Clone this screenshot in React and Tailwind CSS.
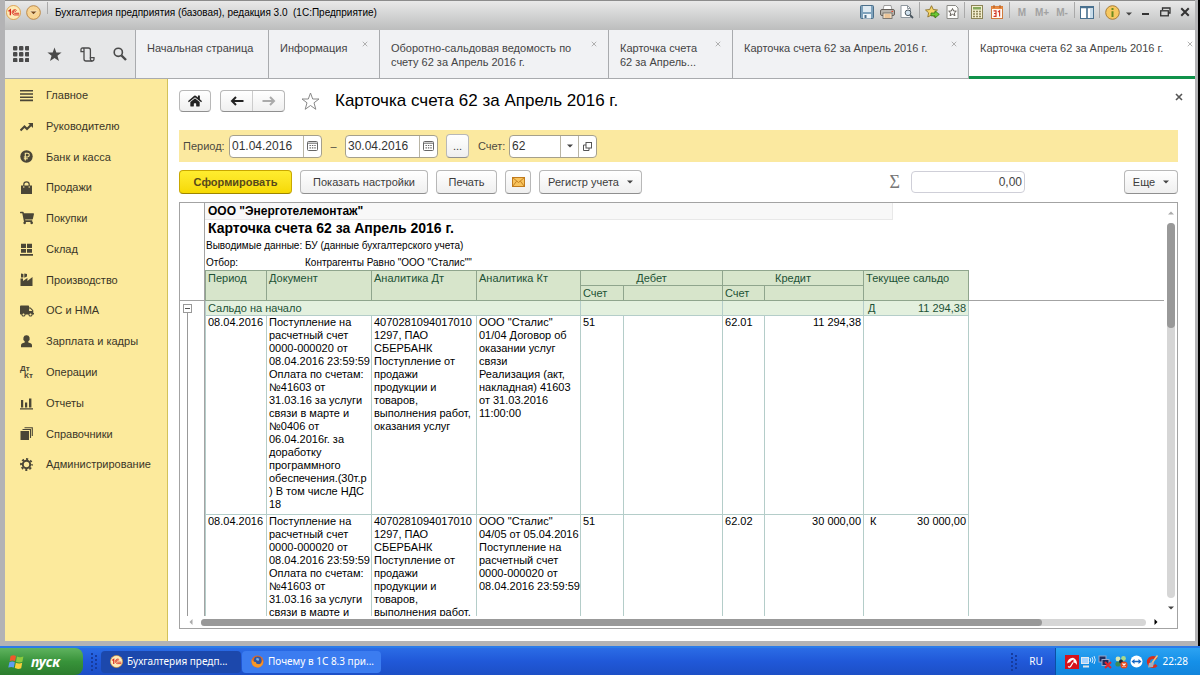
// src/App.jsx

import React, { useState } from 'react';
import { FaHome, FaShoppingCart, FaTruck } from 'react-icons/fa';

// ---------- small icons ----------

const LogoIcon = ({ size = 15 }) => (
    <svg width={size} height={size} viewBox="0 0 16 16">
        <circle cx="8" cy="8" r="7.5" fill="#fdebb8" stroke="#d9902f" strokeWidth="0.8" />
        <path d="M2.6 6.6 L4.6 5.2 V11" fill="none" stroke="#d8261c" strokeWidth="1.4" />
        <path d="M11.3 5.8 A2.8 2.8 0 1 0 9 10.6 H14 M10.2 7.2 A1.3 1.3 0 1 0 9 8.8 H14" fill="none" stroke="#d8261c" strokeWidth="1" />
    </svg>
);

const MenuArrowIcon = () => (
    <svg width="15" height="15" viewBox="0 0 16 16">
        <circle cx="8" cy="8" r="7.3" fill="#f8d492" stroke="#b98443" />
        <path d="M4 6.5 H12 L8 10.5 Z" fill="#7a4b1c" stroke="#fff3d8" strokeWidth="0.8" />
    </svg>
);

const SaveIcon = () => (
    <svg width="14" height="14" viewBox="0 0 14 14">
        <rect x="0.5" y="0.5" width="13" height="13" rx="1" fill="#7fa3bd" stroke="#4b6f8b" />
        <rect x="3" y="1" width="8" height="6" fill="#dfeaf2" />
        <rect x="3" y="9" width="8" height="4.5" fill="#eef4f8" />
        <rect x="4.5" y="10" width="2" height="3" fill="#4b6f8b" />
    </svg>
);

const PrintIcon = () => (
    <svg width="15" height="14" viewBox="0 0 15 14">
        <path d="M4 0.5 H11 L12 5 H3 Z" fill="#fff" stroke="#888" strokeWidth="0.8" />
        <rect x="0.5" y="4.5" width="14" height="6" rx="1.5" fill="#b9b5ae" stroke="#66605a" />
        <rect x="3" y="8" width="9" height="5.5" fill="#f7ecd6" stroke="#66605a" strokeWidth="0.8" />
        <path d="M4.5 10 H10.5 M4.5 12 H10.5" stroke="#d98c3c" strokeWidth="0.8" />
        <rect x="11.5" y="5.8" width="1.6" height="1.2" fill="#e0462c" />
    </svg>
);

const PreviewIcon = () => (
    <svg width="14" height="14" viewBox="0 0 14 14">
        <path d="M1 0.5 H7.5 L10.5 3.5 V12.5 H1 Z" fill="#fff" stroke="#8e979e" />
        <path d="M7.5 0.5 V3.5 H10.5" fill="none" stroke="#8e979e" />
        <circle cx="8" cy="7.8" r="2.8" fill="#d2e3f0" stroke="#4c5860" />
        <path d="M10 10 L13 13" stroke="#4c5860" strokeWidth="1.8" />
    </svg>
);

const StarAddIcon = () => (
    <svg width="15" height="14" viewBox="0 0 15 14">
        <path d="M6.5 0.7 L8.3 4.5 L12.5 5 L9.4 7.8 L10.2 12 L6.5 10 L2.8 12 L3.6 7.8 L0.5 5 L4.7 4.5 Z" fill="#f7d565" stroke="#8d7329" strokeWidth="0.9" />
        <path d="M6 8 H10 V5.8 L14.3 9.4 L10 13 V10.8 H6 Z" fill="#6cc832" stroke="#357313" strokeWidth="0.8" />
    </svg>
);

const StarPageIcon = () => (
    <svg width="13" height="14" viewBox="0 0 13 14">
        <path d="M1 0.5 H9.5 L12 3 V13.5 H1 Z" fill="#fdfdfb" stroke="#8a8a86" />
        <path d="M6.5 3.5 L7.6 6 L10.3 6.2 L8.3 8 L8.9 10.7 L6.5 9.3 L4.1 10.7 L4.7 8 L2.7 6.2 L5.4 6 Z" fill="none" stroke="#55504a" strokeWidth="0.9" />
    </svg>
);

const CalcIcon = () => (
    <svg width="12" height="14" viewBox="0 0 12 14">
        <rect x="0.5" y="0.5" width="11" height="13" fill="#f4efcf" stroke="#8c8457" />
        <rect x="2" y="2" width="8" height="2.5" fill="#87a95c" />
        <path d="M2 6.5 H10 M2 9 H10 M2 11.5 H10" stroke="#8c8457" strokeWidth="1.4" strokeDasharray="2 1" />
    </svg>
);

const CalendarColorIcon = () => (
    <svg width="12" height="14" viewBox="0 0 12 14">
        <rect x="0.5" y="1.5" width="11" height="12" fill="#fffaf2" stroke="#d0793b" />
        <rect x="0.5" y="1.5" width="11" height="2.5" fill="#ea8b42" />
        <path d="M3 0 V3 M9 0 V3" stroke="#a65a22" />
        <path d="M2.5 5.8 H5 V11.4 H2.5 M3 8.5 H5 M7 7 L8.6 5.8 V11.6" fill="none" stroke="#d3382a" strokeWidth="1.2" />
    </svg>
);

const PanelsIcon = () => (
    <svg width="14" height="13" viewBox="0 0 14 13">
        <rect x="0.5" y="0.5" width="13" height="12" fill="#fff" stroke="#49708f" />
        <path d="M0.5 1.5 H13.5 M7 1 V12" stroke="#49708f" strokeWidth="1.6" />
        <rect x="10" y="3" width="3" height="9" fill="#c8dcea" />
    </svg>
);

const InfoIcon = () => (
    <svg width="15" height="15" viewBox="0 0 15 15">
        <circle cx="7.5" cy="7.5" r="6.8" fill="#f7c860" stroke="#a87c35" />
        <path d="M7.5 3 V5 M7.5 6.3 V12" stroke="#6b8a1e" strokeWidth="2" />
    </svg>
);

const Caret = ({ className = 'text-[#444]' }) => (
    <svg width="6" height="4" viewBox="0 0 6 4" className={className}>
        <path d="M0 0.5 H6 L3 3.5 Z" fill="currentColor" />
    </svg>
);

const CloseIcon = ({ size = 6, stroke = '#999', width = 1 }) => (
    <svg width={size} height={size} viewBox="0 0 8 8">
        <path d="M1 1 L7 7 M7 1 L1 7" stroke={stroke} strokeWidth={width} />
    </svg>
);

const GridIcon = () => (
    <svg width="16" height="16" viewBox="0 0 16 16" fill="#4a4a4a">
        {[0, 6, 12].map((y) => [0, 6, 12].map((x) => (
            <rect key={`${x}-${y}`} x={x} y={y} width="4.4" height="4.4" rx="1" />
        )))}
    </svg>
);

const StarIcon = () => (
    <svg width="15" height="15" viewBox="0 0 19 19" fill="#4a4a4a">
        <path d="M9.5 0.5 L11.8 6.9 H18.5 L13.2 11 L15.2 17.8 L9.5 13.8 L3.8 17.8 L5.8 11 L0.5 6.9 H7.2 Z" />
    </svg>
);

const HistoryIcon = () => (
    <svg width="15" height="15" viewBox="0 0 15 15" fill="none" stroke="#4a4a4a" strokeWidth="1.3">
        <path d="M4 4.6 H1 V2.6 Q1 1 2.6 1 H8.4 Q10.4 1 10.4 3 V10.6 H14 V12.2 Q14 14 12.2 14 H6 Q4 14 4 12 V2.6 Q4 1 2.6 1" />
        <path d="M10.4 10.6 V12.2 Q10.4 14 12.2 14" />
    </svg>
);

const SearchIcon = () => (
    <svg width="14" height="14" viewBox="0 0 14 14" fill="none" stroke="#4a4a4a">
        <circle cx="5.3" cy="5.3" r="4.1" strokeWidth="1.6" />
        <path d="M8.5 8.5 L13 13" strokeWidth="2.4" />
    </svg>
);

const ArrowIcon = ({ flip, color }) => (
    <svg width="14" height="10" viewBox="0 0 14 10" className={flip ? 'rotate-180' : ''}>
        <path d="M13.5 5 H2 M6 1 L2 5 L6 9" fill="none" stroke={color} strokeWidth="2" />
    </svg>
);

const CalendarIcon = () => (
    <svg width="11" height="10" viewBox="0 0 11 10">
        <rect x="0.5" y="0.5" width="10" height="9" rx="1" fill="#fff" stroke="#666" />
        <path d="M1 2.2 H10" stroke="#666" />
        <path d="M2.5 4.5 H9 M2.5 6.8 H9" stroke="#666" strokeWidth="1.2" strokeDasharray="1.4 1" />
    </svg>
);

const OpenIcon = () => (
    <svg width="9" height="9" viewBox="0 0 9 9" fill="none" stroke="#555">
        <rect x="3" y="0.5" width="5.5" height="5.5" />
        <path d="M3 3 H0.5 V8.5 H6 V6" />
    </svg>
);

const MailIcon = () => (
    <svg width="13" height="10" viewBox="0 0 13 10">
        <rect x="0.5" y="0.5" width="12" height="9" fill="#f8c35c" stroke="#c07a1c" />
        <path d="M0.5 0.5 L6.5 5.5 L12.5 0.5 M0.5 9.5 L4.6 4.2 M12.5 9.5 L8.4 4.2" fill="none" stroke="#c07a1c" strokeWidth="0.9" />
    </svg>
);

const sideIcons = {
    main: <path d="M0 1.8 H13 M0 5 H13 M0 8.2 H13 M0 11.4 H13" stroke="#4a4636" strokeWidth="1.6" />,
    chart: (
        <g>
            <path d="M0.5 10.5 L4.5 6.5 L7 9 L11.5 4.5" fill="none" stroke="#4a4636" strokeWidth="2.1" />
            <path d="M8 3 H13 V8 Z" />
        </g>
    ),
    ruble: (
        <g>
            <circle cx="6.5" cy="6.5" r="6.2" />
            <path d="M5.3 10.5 V3.2 H7.4 A1.9 1.9 0 0 1 7.4 7 H3.8 M3.8 8.7 H7.8" fill="none" stroke="#fcea9c" strokeWidth="1.1" />
        </g>
    ),
    bag: (
        <g>
            <path d="M1 4.5 H12 V13 H1 Z" />
            <path d="M3.8 6.5 V3.5 A2.7 2.7 0 0 1 9.2 3.5 V6.5" fill="none" stroke="#4a4636" strokeWidth="1.2" />
            <path d="M3.8 5 V7 M9.2 5 V7" stroke="#fcea9c" strokeWidth="0.8" />
        </g>
    ),
    store: <path d="M1 0.8 H6 V5 H1 Z M7 0.8 H12 V5 H7 Z M1 6 H6 V9.8 H1 Z M7 6 H12 V9.8 H7 Z M0 11 H13 V12.8 H0 Z" />,
    factory: <path d="M0.5 13 V5.6 H3 V8 L7.4 5 V8 L12.5 4 V13 Z M1 0.5 L3.4 1 V4.6 H1 Z M4.3 0.5 L7 1 V3.6 L4.3 4.8 Z" />,
    person: <path d="M6.5 0.3 A3 3.2 0 0 1 8.3 6.2 V7.6 Q12 8.3 12 10.4 V12.3 H1 V10.4 Q1 8.3 4.7 7.6 V6.2 A3 3.2 0 0 1 6.5 0.3 Z" />,
    bars: <path d="M0 11.3 H13 V12.6 H0 Z M1 3 H3.2 V10.6 H1 Z M5 5.5 H7.2 V10.6 H5 Z M9 1.5 H11.4 V10.6 H9 Z" />,
    books: (
        <g>
            <rect x="0.5" y="4" width="8.5" height="9" />
            <path d="M2.5 2.5 H10.5 V11 M4.5 0.7 H12.3 V9" fill="none" stroke="#4a4636" strokeWidth="1.1" />
        </g>
    ),
    cog: (
        <g fill="none" stroke="#4a4636">
            <circle cx="6.5" cy="6.5" r="3.7" strokeWidth="2" />
            <circle cx="6.5" cy="6.5" r="5.5" strokeWidth="1.8" strokeDasharray="2.16 2.16" strokeDashoffset="1.08" />
        </g>
    ),
};

const SideIcon = ({ name }) => {
    if (name === 'cart') return <FaShoppingCart size={14} />;
    if (name === 'truck') return <FaTruck size={14} />;
    if (name === 'dtkt') {
        return (
            <span className="flex flex-col text-[8px] leading-[7px] font-bold" aria-hidden="true">
                <span>Дт</span>
                <span className="pl-1">Кт</span>
            </span>
        );
    }
    return <svg width="13" height="13" viewBox="0 0 13 13" fill="#4a4636">{sideIcons[name]}</svg>;
};

// ---------- data ----------

const tabs = [
    { title: 'Начальная страница', width: 'w-[133px]', closable: false },
    { title: 'Информация', width: 'w-[111px]', closable: true },
    { title: 'Оборотно-сальдовая ведомость по\nсчету 62 за Апрель 2016 г.', width: 'w-[229px]', closable: true },
    { title: 'Карточка счета\n62 за Апрель...', width: 'w-[124px]', closable: true },
    { title: 'Карточка счета 62 за Апрель 2016 г.', width: 'w-[236px]', closable: true },
];

const sections = [
    { icon: 'main', label: 'Главное' },
    { icon: 'chart', label: 'Руководителю' },
    { icon: 'ruble', label: 'Банк и касса' },
    { icon: 'bag', label: 'Продажи' },
    { icon: 'cart', label: 'Покупки' },
    { icon: 'store', label: 'Склад' },
    { icon: 'factory', label: 'Производство' },
    { icon: 'truck', label: 'ОС и НМА' },
    { icon: 'person', label: 'Зарплата и кадры' },
    { icon: 'dtkt', label: 'Операции' },
    { icon: 'bars', label: 'Отчеты' },
    { icon: 'books', label: 'Справочники' },
    { icon: 'cog', label: 'Администрирование' },
];

const entries = [
    {
        date: '08.04.2016',
        doc: 'Поступление на\nрасчетный счет\n0000-000020 от\n08.04.2016 23:59:59\nОплата по счетам:\n№41603 от\n31.03.16 за услуги\nсвязи в марте и\n№0406 от\n06.04.2016г. за\nдоработку\nпрограммного\nобеспечения.(30т.р\n) В том числе НДС\n18',
        debitInfo: '4070281094017010\n1297, ПАО\nСБЕРБАНК\nПоступление от\nпродажи\nпродукции и\nтоваров,\nвыполнения работ,\nоказания услуг',
        creditInfo: 'ООО "Сталис"\n01/04 Договор об\nоказании услуг\nсвязи\nРеализация (акт,\nнакладная) 41603\nот 31.03.2016\n11:00:00',
        debit: '51',
        credit: '62.01',
        amount: '11 294,38',
        side: '',
        balance: '',
    },
    {
        date: '08.04.2016',
        doc: 'Поступление на\nрасчетный счет\n0000-000020 от\n08.04.2016 23:59:59\nОплата по счетам:\n№41603 от\n31.03.16 за услуги\nсвязи в марте и',
        debitInfo: '4070281094017010\n1297, ПАО\nСБЕРБАНК\nПоступление от\nпродажи\nпродукции и\nтоваров,\nвыполнения работ,',
        creditInfo: 'ООО "Сталис"\n04/05 от 05.04.2016\nПоступление на\nрасчетный счет\n0000-000020 от\n08.04.2016 23:59:59',
        debit: '51',
        credit: '62.02',
        amount: '30 000,00',
        side: 'К',
        balance: '30 000,00',
    },
];

// ---------- window chrome ----------

const Tool = ({ label, children }) => (
    <button aria-label={label} className="w-5 h-5 flex items-center justify-center">{children}</button>
);

const ToolSeparator = () => <span className="w-px h-4 mx-0.5 -mt-1 bg-[#a9a9a9]" />;

const TitleBar = () => (
    <header className="h-[30px] pb-[7px] pl-px flex items-center border-t border-[#8c8c8c] bg-linear-to-b from-[#e9e9e9] via-[#d2d3d3] to-[#bcbdbd]">
        <LogoIcon />
        <span className="ml-[5px]"><MenuArrowIcon /></span>
        <span className="w-px h-3 ml-1.5 -mt-2 bg-[#aaa]" />
        <h1 className="ml-[7px] flex-1 text-[10px] text-black whitespace-pre">Бухгалтерия предприятия (базовая), редакция 3.0  (1С:Предприятие)</h1>
        <Tool label="Сохранить"><SaveIcon /></Tool>
        <Tool label="Печать"><PrintIcon /></Tool>
        <Tool label="Просмотр"><PreviewIcon /></Tool>
        <ToolSeparator />
        <Tool label="Добавить в избранное"><StarAddIcon /></Tool>
        <Tool label="Избранное"><StarPageIcon /></Tool>
        <ToolSeparator />
        <Tool label="Калькулятор"><CalcIcon /></Tool>
        <Tool label="Календарь"><CalendarColorIcon /></Tool>
        <ToolSeparator />
        {['M', 'M+', 'M-'].map((m) => (
            <button key={m} className="w-5 text-[10px] font-bold text-[#a2a2a2]">{m}</button>
        ))}
        <ToolSeparator />
        <Tool label="Панели"><PanelsIcon /></Tool>
        <ToolSeparator />
        <Tool label="О программе"><InfoIcon /></Tool>
        <button aria-label="Еще" className="w-[13px] h-5 pt-1 flex items-center justify-center"><Caret /></button>
        <Tool label="Свернуть"><span className="w-[7px] h-0.5 mt-1 bg-[#333]" /></Tool>
        <Tool label="Восстановить">
            <svg width="11" height="10" viewBox="0 0 11 10" fill="none" stroke="#333" strokeWidth="1.3">
                <path d="M2.5 3 V1 H10 V6 H8.5" />
                <rect x="0.7" y="3.8" width="7.6" height="5" />
            </svg>
        </Tool>
        <Tool label="Закрыть"><CloseIcon size={10} stroke="#333" width={1.6} /></Tool>
    </header>
);

const TabBar = () => (
    <div className="h-[49px] flex bg-[#f1f2f4] text-[11px] leading-[14px] text-[#444]">
        <div className="w-[131px] shrink-0 px-2 flex items-center justify-between bg-[#e6e7e8] border-r border-b border-[#a9abae]">
            <button aria-label="Меню"><GridIcon /></button>
            <button aria-label="Избранное"><StarIcon /></button>
            <button aria-label="История"><HistoryIcon /></button>
            <button aria-label="Поиск"><SearchIcon /></button>
        </div>
        {tabs.map((tab, i) => (
            <div key={i} className={`${tab.width} shrink-0 relative pl-[11px] pt-[11px] border-r border-b border-[#a9abae]`}>
                <button className="block text-left whitespace-pre">{tab.title}</button>
                {tab.closable && (
                    <button aria-label="Закрыть вкладку" className="absolute right-[11px] top-[11px]"><CloseIcon /></button>
                )}
            </div>
        ))}
        <div className="flex-1 min-w-0 relative pl-[11px] pt-[11px] bg-white border-b-[3px] border-[#10924a]">
            <button className="block text-left whitespace-pre">Карточка счета 62 за Апрель 2016 г.</button>
            <button aria-label="Закрыть вкладку" className="absolute right-0.5 top-[11px]"><CloseIcon /></button>
        </div>
    </div>
);

const Sidebar = () => (
    <nav className="w-[163px] shrink-0 pt-px bg-[#fcea9c] border-r border-[#d3c25a]">
        <ul className="h-[400px] flex flex-col">
            {sections.map((s) => (
                <li key={s.label} className="flex-1 min-h-0">
                    <a href="#" className="h-full pl-[15px] flex items-center text-[11px] text-[#3a3628]">
                        <span className="w-[26px] text-[#4a4636]"><SideIcon name={s.icon} /></span>
                        {s.label}
                    </a>
                </li>
            ))}
        </ul>
    </nav>
);

// ---------- report form ----------

const Btn = ({ className = '', children, ...rest }) => (
    <button
        className={`h-6 flex items-center justify-center rounded-sm border border-[#b8b8b8] border-b-[#8f8f8f] bg-linear-to-b from-white to-[#efefef] text-[#3c3c3c] ${className}`}
        {...rest}
    >
        {children}
    </button>
);

const DateField = ({ label, value, onChange }) => (
    <div className="w-[93px] h-[23px] flex rounded-sm border border-[#a5a08c] bg-white overflow-hidden">
        <input aria-label={label} value={value} onChange={(e) => onChange(e.target.value)} className="w-[73px] px-0.5 text-[12px] text-[#333] outline-none" />
        <button aria-label="Выбрать дату" className="flex-1 flex items-center justify-center border-l border-[#b9b5a5]"><CalendarIcon /></button>
    </div>
);

const FormHeader = () => (
    <div className="h-[22px] flex items-center">
        <Btn className="w-8 h-[22px]" aria-label="Домой"><FaHome size={14} className="text-[#222]" /></Btn>
        <div className="w-[65px] h-[22px] ml-[9px] flex rounded-sm border border-[#b8b8b8] border-b-[#8f8f8f] bg-linear-to-b from-white to-[#efefef]">
            <button aria-label="Назад" className="flex-1 flex items-center justify-center border-r border-[#ccc]"><ArrowIcon color="#222" /></button>
            <button aria-label="Вперед" className="flex-1 flex items-center justify-center"><ArrowIcon flip color="#aaa" /></button>
        </div>
        <button aria-label="В избранное" className="ml-4">
            <svg width="19" height="19" viewBox="0 0 19 19">
                <path d="M9.5 1 L11.7 7 H18 L13 10.8 L14.8 17.3 L9.5 13.5 L4.2 17.3 L6 10.8 L1 7 H7.3 Z" fill="#fff" stroke="#888" />
            </svg>
        </button>
        <h2 className="ml-[15px] flex-1 text-[17px] text-black">Карточка счета 62 за Апрель 2016 г.</h2>
        <button aria-label="Закрыть" className="-mr-[5px] mb-2"><CloseIcon size={8} stroke="#555" width={1.6} /></button>
    </div>
);

const FilterBar = () => {
    const [from, setFrom] = useState('01.04.2016');
    const [to, setTo] = useState('30.04.2016');
    const [account, setAccount] = useState('62');

    return (
        <div className="h-8 mt-[18px] pl-1 shrink-0 flex items-center bg-[#fbe9a0] text-[11px] text-[#4c4a40]">
            <span className="w-[46px]">Период:</span>
            <DateField label="Начало периода" value={from} onChange={setFrom} />
            <span className="w-[23px] text-center">–</span>
            <DateField label="Конец периода" value={to} onChange={setTo} />
            <Btn className="w-[23px] ml-2" aria-label="Выбрать период">...</Btn>
            <label htmlFor="account" className="ml-[9px] w-[31px]">Счет:</label>
            <div className="w-[88px] h-[23px] flex rounded-sm border border-[#a5a08c] bg-white overflow-hidden">
                <input id="account" value={account} onChange={(e) => setAccount(e.target.value)} className="w-[50px] px-0.5 text-[12px] text-[#333] outline-none" />
                <button aria-label="Список счетов" className="w-[18px] flex items-center justify-center border-l border-[#b9b5a5]"><Caret /></button>
                <button aria-label="Открыть" className="flex-1 flex items-center justify-center border-l border-[#b9b5a5]"><OpenIcon /></button>
            </div>
        </div>
    );
};

const Toolbar = () => (
    <div className="mt-2 shrink-0 flex items-center text-[11px]">
        <button className="w-[113px] h-6 rounded-sm border border-[#c9a800] border-b-[#9d8500] bg-linear-to-b from-[#ffed2e] to-[#f6d900] font-bold text-[#57491a]">Сформировать</button>
        <Btn className="w-32 ml-2">Показать настройки</Btn>
        <Btn className="w-[61px] ml-2">Печать</Btn>
        <Btn className="w-[26px] ml-2" aria-label="Отправить по почте"><MailIcon /></Btn>
        <Btn className="w-[103px] ml-2 gap-2">Регистр учета <Caret /></Btn>
        <label htmlFor="sum" className="ml-auto font-['Liberation_Serif',serif] text-[18px] leading-5 text-[#777]">Σ</label>
        <input id="sum" readOnly value="0,00" className="w-[114px] h-[22px] ml-[11px] mr-[99px] px-0.5 rounded-sm border border-[#cfcfd8] text-right text-[12px] text-[#444]" />
        <Btn className="w-[54px] gap-2">Еще <Caret /></Btn>
    </div>
);

const headCell = 'border border-[#8fa58d] px-0.5 align-top text-left font-normal';
const bodyCell = 'border border-[#b4cdc9] px-0.5 align-top whitespace-pre';

const ReportTable = () => (
    <table className="w-[763px] shrink-0 table-fixed border-collapse text-[11px] leading-[13px] text-black">
        <colgroup>
            <col className="w-[61px]" />
            <col className="w-[105px]" />
            <col className="w-[105px]" />
            <col className="w-[104px]" />
            <col className="w-[43px]" />
            <col className="w-[99px]" />
            <col className="w-[42px]" />
            <col className="w-[99px]" />
            <col className="w-[105px]" />
        </colgroup>
        <thead className="bg-[#d7e5cb] leading-[14px] text-[#1d5236]">
            <tr className="h-[15px]">
                <th rowSpan={2} className={headCell}>Период</th>
                <th rowSpan={2} className={headCell}>Документ</th>
                <th rowSpan={2} className={headCell}>Аналитика Дт</th>
                <th rowSpan={2} className={headCell}>Аналитика Кт</th>
                <th colSpan={2} className="border border-[#8fa58d] font-normal text-center">Дебет</th>
                <th colSpan={2} className="border border-[#8fa58d] font-normal text-center">Кредит</th>
                <th rowSpan={2} className={headCell}>Текущее сальдо</th>
            </tr>
            <tr className="h-[15px]">
                <th className={headCell}>Счет</th>
                <th className={headCell}></th>
                <th className={headCell}>Счет</th>
                <th className={headCell}></th>
            </tr>
        </thead>
        <tbody>
            <tr className="h-[15px] bg-[#e3f0de] leading-[14px] text-[#1d5236]">
                <td colSpan={4} className="border border-[#b4cdc9] px-0.5">Сальдо на начало</td>
                <td colSpan={2} className="border border-[#b4cdc9]"></td>
                <td colSpan={2} className="border border-[#b4cdc9]"></td>
                <td className="border border-[#b4cdc9] pl-1 pr-0.5">
                    <div className="flex justify-between"><span>Д</span><span>11 294,38</span></div>
                </td>
            </tr>
            {entries.map((e, i) => (
                <tr key={i} className="h-[199px]">
                    <td className={bodyCell}>{e.date}</td>
                    <td className={bodyCell}>{e.doc}</td>
                    <td className={bodyCell}>{e.debitInfo}</td>
                    <td className={bodyCell}>{e.creditInfo}</td>
                    <td className={bodyCell}>{e.debit}</td>
                    <td className={bodyCell}></td>
                    <td className={bodyCell}>{e.credit}</td>
                    <td className={`${bodyCell} text-right`}>{e.amount}</td>
                    <td className={bodyCell}>
                        <div className="pl-1 flex justify-between"><span>{e.side}</span><span>{e.balance}</span></div>
                    </td>
                </tr>
            ))}
        </tbody>
    </table>
);

const Sheet = () => (
    <section className="mt-2 flex-1 min-h-0 flex flex-col border border-[#a3a3a3] bg-white">
        <div className="flex-1 min-h-0 flex">
            <div className="flex-1 min-w-0 flex overflow-hidden">
                {/* row grouping gutter */}
                <div className="w-[25px] shrink-0 flex flex-col border-r border-[#a3a3a3]">
                    <div className="h-[98px] shrink-0 border-b border-[#a3a3a3]" />
                    <button aria-label="Свернуть группу" className="w-[9px] h-[9px] mt-[3px] ml-[3px] shrink-0 flex items-center justify-center border border-[#999] bg-white">
                        <span className="w-[5px] h-px bg-[#555]" />
                    </button>
                    <div className="flex-1 w-px ml-[7px] bg-[#999]" />
                </div>
                <div className="flex-1 min-w-0 text-[10px] text-black">
                    <div className="w-[688px] h-[17px] pl-[3px] flex items-center border-r border-b border-[#e8e8e8] bg-[#f8f8f8] text-[12px] font-bold">ООО "Энерготелемонтаж"</div>
                    <div className="h-[17px] pl-[3px] flex items-center text-[14px] font-bold">Карточка счета 62 за Апрель 2016 г.</div>
                    <dl className="grid grid-cols-[99px_1fr] grid-rows-[17px_16px] items-center pl-px">
                        <dt>Выводимые данные:</dt>
                        <dd>БУ (данные бухгалтерского учета)</dd>
                        <dt>Отбор:</dt>
                        <dd>Контрагенты Равно "ООО "Сталис""</dd>
                    </dl>
                    <div className="flex items-start">
                        <ReportTable />
                        <div className="flex-1 h-[31px] border-b border-[#a3a3a3]" />
                    </div>
                </div>
            </div>
            <div className="w-[13px] shrink-0 pt-2 pb-1.5 flex flex-col items-center">
                <Caret className="rotate-180 text-[#aaa]" />
                <div className="w-2 flex-1 mt-2 mb-2 rounded-full bg-[#d6d6d6]">
                    <div className="h-[28%] rounded-full bg-[#999]" />
                </div>
                <Caret />
            </div>
        </div>
        <div className="h-3 shrink-0 pl-2 pr-[18px] flex items-center">
            <Caret className="rotate-90 text-[#aaa]" />
            <div className="h-[7px] flex-1 mx-[7px] rounded-full bg-[#d6d6d6]">
                <div className="w-[89%] h-full rounded-full bg-[#999]" />
            </div>
            <Caret className="-rotate-90" />
        </div>
    </section>
);

// ---------- taskbar ----------

const FirefoxIcon = () => (
    <svg width="13" height="13" viewBox="0 0 14 14">
        <circle cx="7" cy="7" r="6.5" fill="#e66a1c" />
        <circle cx="7.2" cy="5.8" r="4.2" fill="#2d56a5" />
        <path d="M1 4 Q2 8 5.5 7.5 Q4.5 10 8.5 10 Q12 9.5 12.5 5 Q14.5 10 10 12.8 Q5 14.5 1.8 11 Q0 8 1 4 Z" fill="#f4972a" />
        <path d="M6 3 L9 4 L8 6.5 L5.5 5.5 Z" fill="#7db1e6" />
    </svg>
);

const WindowsFlag = () => (
    <svg width="17" height="16" viewBox="0 0 17 16">
        <path d="M2.6 2 Q5.5 0.4 8 2 L7 7.2 Q4.4 5.8 1.6 7.2 Z" fill="#f0582b" />
        <path d="M9 2.5 Q12 4 15.4 2.4 L14.4 7.8 Q11.2 9.2 8 7.7 Z" fill="#8ccb3e" />
        <path d="M1.4 8.2 Q4.2 6.8 6.8 8.2 L5.8 13.6 Q3.2 12.2 0.3 13.6 Z" fill="#5f9df0" />
        <path d="M7.8 8.7 Q11 10.2 14.2 8.8 L13.2 14.2 Q10 15.6 6.8 14.1 Z" fill="#fbd03b" />
    </svg>
);

const Grip = () => (
    <svg width="6" height="18" viewBox="0 0 6 18" fill="#163c9e">
        {[0, 4, 8, 12, 16].map((y) => (
            <g key={y}>
                <rect x="0" y={y} width="2" height="2" />
                <rect x="4" y={y === 16 ? 14 : y + 2} width="2" height="2" />
            </g>
        ))}
    </svg>
);

const Tray = () => (
    <div className="w-[145px] h-full pl-[9px] pr-3 flex items-center gap-0.5 border-l border-[#0b4fa5] bg-linear-to-b from-[#2ba3f2] via-[#1590e8] to-[#1285dc] text-white">
        <svg width="14" height="14" viewBox="0 0 14 14">
            <rect width="14" height="14" fill="#d5121c" />
            <path d="M2 8.5 Q3 3 8 2.8 Q12.3 4 12 10 Q10.5 7 8 7.6 Q5 6.4 2 8.5 Z" fill="#fff" />
            <path d="M4.5 7.8 Q6 5.5 8.5 4.5 Q8.8 6 8 8 Z" fill="#d5121c" />
            <path d="M8 7.5 L5.5 11.5 Q4.2 12.8 3.2 11.3" fill="none" stroke="#fff" strokeWidth="1.2" />
        </svg>
        <svg width="15" height="14" viewBox="0 0 15 14">
            <rect x="0.5" y="2.5" width="7" height="6" fill="#a6d3ff" stroke="#e4e9ee" />
            <path d="M2 11.5 H8" stroke="#dfe5ea" strokeWidth="2" />
            <path d="M9 3 Q10.5 5 9 7 M11 2 Q13 5 11 8 M13 1 Q15.5 5 13 9" fill="none" stroke="#e7f3ff" strokeWidth="0.9" />
        </svg>
        <svg width="14" height="14" viewBox="0 0 14 14">
            <rect x="1" y="1" width="7" height="6" fill="#1c2c60" stroke="#99a6c8" />
            <rect x="4" y="4.5" width="7" height="6" fill="#1c2c60" stroke="#99a6c8" />
            <path d="M7 7 L13 13 M13 7 L7 13" stroke="#e3242b" strokeWidth="2" />
        </svg>
        <svg width="14" height="14" viewBox="0 0 14 14">
            <circle cx="4" cy="4" r="2.4" fill="#d8e6b0" />
            <circle cx="9.5" cy="3.5" r="2.4" fill="#a9d98b" />
            <circle cx="4" cy="9" r="2.6" fill="#3d8b56" />
            <circle cx="7" cy="6.5" r="2" fill="#1f2937" />
            <circle cx="10" cy="10" r="3.6" fill="#e5481c" />
            <path d="M8.5 8.5 L11.5 11.5 M11.5 8.5 L8.5 11.5" stroke="#fff" strokeWidth="1.2" />
        </svg>
        <svg width="13" height="13" viewBox="0 0 13 13">
            <circle cx="6.5" cy="6.5" r="6" fill="#fff" />
            <path d="M1.5 6.5 L4.5 4 V5.7 H8.5 V4 L11.5 6.5 L8.5 9 V7.3 H4.5 V9 Z" fill="#1668c5" />
        </svg>
        <svg width="14" height="14" viewBox="0 0 14 14">
            <path d="M11.5 4 A4.6 4.6 0 1 0 11.5 10" fill="none" stroke="#d7301f" strokeWidth="3" />
            <path d="M12.5 0.5 L7 8" stroke="#f0c080" strokeWidth="1.5" />
            <path d="M4 8 L9 7 L8 12 L3 12.5 Z" fill="#a7aeb8" />
        </svg>
        <span className="ml-auto">22:28</span>
    </div>
);

const Taskbar = () => (
    <footer className="h-[29px] shrink-0 flex items-center border-t-2 border-[#2b7be8] bg-linear-to-b from-[#2b6ce6] via-[#2058d8] to-[#1c4fc6] font-['Noto_Sans',sans-serif] text-[10px] text-white">
        <button className="w-[83px] h-full pl-2 flex items-center gap-1.5 rounded-r-lg bg-linear-to-b from-[#5fb35f] via-[#38933a] to-[#2c7d2e] text-[14px] font-bold italic">
            <WindowsFlag />
            пуск
        </button>
        <span className="ml-2"><Grip /></span>
        <button className="w-[140px] h-[22px] ml-1 pl-[9px] flex items-center gap-1 rounded-sm bg-[#1c48ac]">
            <LogoIcon size={13} />
            Бухгалтерия предп...
        </button>
        <button className="w-[139px] h-[22px] ml-px pl-[9px] flex items-center gap-1 rounded-sm bg-[#3b7cf0]">
            <FirefoxIcon />
            Почему в 1С 8.3 при...
        </button>
        <span className="ml-auto"><Grip /></span>
        <span className="w-[38px] text-center">RU</span>
        <Tray />
    </footer>
);

const App = () => {
    return (
        <div className="h-screen flex flex-col overflow-hidden bg-black font-['Liberation_Sans',Arial,sans-serif]">
            <div className="flex-1 min-h-0 mr-0.5 flex flex-col border-l-[5px] border-r-[3px] border-b-[5px] border-[#b3b3b5]">
                <TitleBar />
                <TabBar />
                <div className="flex-1 min-h-0 flex bg-white">
                    <Sidebar />
                    <main className="flex-1 min-w-0 pt-[11px] pb-3 pl-[11px] pr-[17px] flex flex-col">
                        <FormHeader />
                        <FilterBar />
                        <Toolbar />
                        <Sheet />
                    </main>
                </div>
            </div>
            <Taskbar />
        </div>
    );
};

export default App;
